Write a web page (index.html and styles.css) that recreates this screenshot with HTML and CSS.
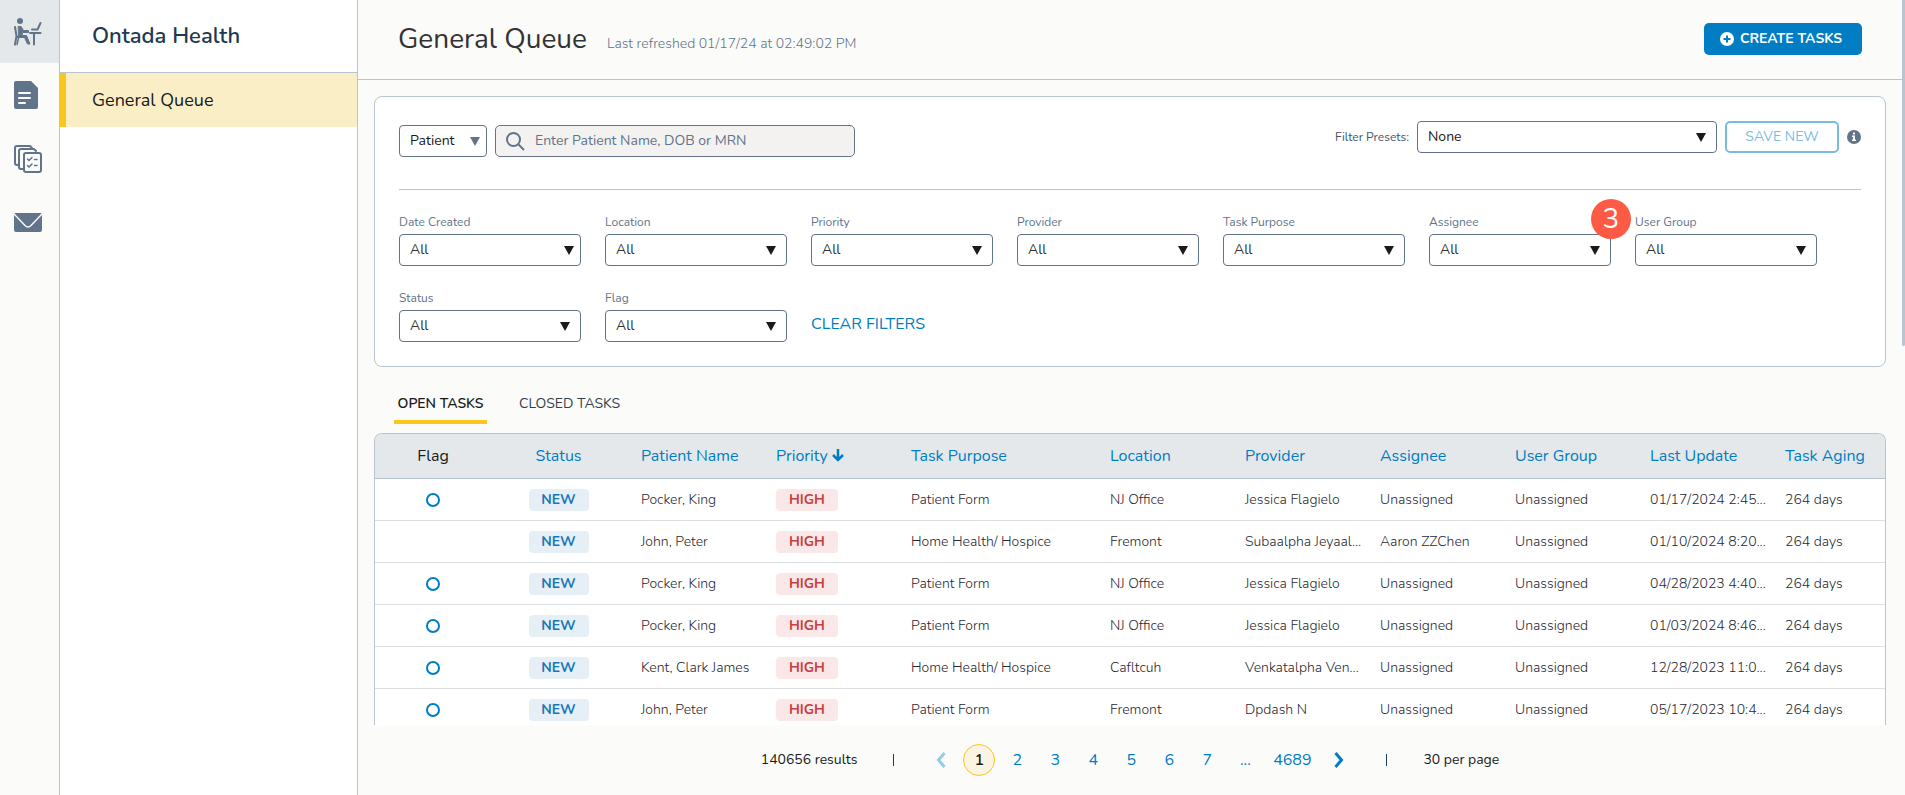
FILE: index.html
```html
<!DOCTYPE html>
<html lang="en">
  <head>
    <meta charset="UTF-8" />
    <meta name="viewport" content="width=device-width, initial-scale=1.0" />
    <title>General Queue</title>
    <link rel="stylesheet" href="styles.css">
  </head>

  <body>
    <nav class="rail">
      <a href="#" class="active" aria-label="Work queue">
        <svg width="28" height="28" viewBox="0 0 28 28" fill="none" stroke="currentColor" stroke-linecap="round" stroke-linejoin="round">
          <circle cx="6" cy="3" r="3" fill="currentColor" stroke="none" />
          <path d="M1 9l1.500 9L1 26.500M2.500 19h2" stroke-width="2" />
          <path d="M4.500 8.500h2.500l2.500 4h5v2H8.500l-.5 3h4.500l3.500 8.500h-2.500l-3-6.500H5z" fill="currentColor" stroke-width="1" />
          <path d="M4.500 20l-1.500 6.500" stroke-width="1.500" />
          <path d="M16 15h10.500M20 15v11.500M18 11.500h5.500l3-6.500" stroke-width="2" />
        </svg>
      </a>
      <a href="#" aria-label="Documents">
        <svg width="28" height="28" viewBox="0 0 28 28">
          <path d="M2 0h15l7 7v19a2 2 0 0 1-2 2H2a2 2 0 0 1-2-2V2a2 2 0 0 1 2-2z" fill="currentColor" />
          <path d="M5 12h11M5 17h11M5 22h6" stroke="#fbfbf9" stroke-width="2" stroke-linecap="round" />
        </svg>
      </a>
      <a href="#" aria-label="Task lists">
        <svg width="28" height="28" viewBox="0 0 28 28" fill="none" stroke="currentColor" stroke-width="2" stroke-linecap="round" stroke-linejoin="round">
          <path d="M5 20H3a2 2 0 0 1-2-2V3a2 2 0 0 1 2-2h13l2 2" />
          <path d="M9 24H7a2 2 0 0 1-2-2V6a2 2 0 0 1 2-2h13l2 2" />
          <rect x="10" y="8" width="17" height="19" rx="2" />
          <path d="M13.500 14l1.500 1.500 3-3M13.500 20.500L15 22l3-3M20.500 14.500h2.500M20.500 20.500h2.500" stroke-width="1.500" />
        </svg>
      </a>
      <a href="#" aria-label="Messages">
        <svg width="28" height="28" viewBox="0 0 28 28">
          <path d="M2 4h24a2 2 0 0 1 2 2v15a2 2 0 0 1-2 2H2a2 2 0 0 1-2-2V6a2 2 0 0 1 2-2z" fill="currentColor" />
          <path d="M0 5l11 11.500q3 3 6 0L28 5" fill="none" stroke="#fbfbf9" stroke-width="1.500" />
        </svg>
      </a>
    </nav>

    <aside class="sidebar">
      <h2>Ontada Health</h2>
      <a href="#">General Queue</a>
    </aside>

    <main>
      <header>
        <h1>General Queue</h1>
        <p>Last refreshed 01/17/24 at 02:49:02 PM</p>
        <button class="create">
          <svg width="14" height="14" viewBox="0 0 14 14">
            <circle cx="7" cy="7" r="7" fill="#fff" />
            <path d="M7 3.500v7M3.500 7h7" stroke="#007dc3" stroke-width="2" />
          </svg>
          CREATE TASKS
        </button>
      </header>

      <section class="filters">
        <div class="search-row">
          <div class="select search-type">
            <select aria-label="Search by">
              <option>Patient</option>
            </select>
          </div>
          <div class="search">
            <svg width="19" height="19" viewBox="0 0 19 19" fill="none" stroke="#62748a" stroke-width="2">
              <circle cx="7.500" cy="7.500" r="6.500" />
              <path d="M12 12l6 6" />
            </svg>
            <input type="text" aria-label="Search patients" placeholder="Enter Patient Name, DOB or MRN" />
          </div>
          <div class="presets">
            <label for="presets">Filter Presets:</label>
            <div class="select">
              <select id="presets">
                <option>None</option>
              </select>
            </div>
            <button class="save" disabled>SAVE NEW</button>
            <svg class="info" width="14" height="14" viewBox="0 0 14 14">
              <circle cx="7" cy="7" r="7" fill="#62748a" />
              <path d="M6 2.500h2v2H6zM5 5.500h3v4h1v1.500H5V9.500h1V7H5z" fill="#fff" />
            </svg>
          </div>
        </div>

        <div class="filter-grid">
          <div class="field">
            <label for="date">Date Created</label>
            <div class="select date">
              <select id="date"><option>All</option></select>
            </div>
          </div>
          <div class="field">
            <label for="location">Location</label>
            <div class="select">
              <select id="location"><option>All</option></select>
            </div>
          </div>
          <div class="field">
            <label for="priority">Priority</label>
            <div class="select">
              <select id="priority"><option>All</option></select>
            </div>
          </div>
          <div class="field">
            <label for="provider">Provider</label>
            <div class="select">
              <select id="provider"><option>All</option></select>
            </div>
          </div>
          <div class="field">
            <label for="purpose">Task Purpose</label>
            <div class="select">
              <select id="purpose"><option>All</option></select>
            </div>
          </div>
          <div class="field">
            <label for="assignee">Assignee</label>
            <div class="select">
              <select id="assignee"><option>All</option></select>
            </div>
            <span class="marker">3</span>
          </div>
          <div class="field">
            <label for="group">User Group</label>
            <div class="select">
              <select id="group"><option>All</option></select>
            </div>
          </div>
          <div class="field">
            <label for="status">Status</label>
            <div class="select">
              <select id="status"><option>All</option></select>
            </div>
          </div>
          <div class="field">
            <label for="flag">Flag</label>
            <div class="select">
              <select id="flag"><option>All</option></select>
            </div>
          </div>
          <button class="clear">CLEAR FILTERS</button>
        </div>
      </section>

      <div class="tabs">
        <button class="selected">OPEN TASKS</button>
        <button>CLOSED TASKS</button>
      </div>

      <div class="table-wrap">
        <table>
          <colgroup>
            <col class="col-flag" />
            <col span="3" />
            <col class="col-purpose" />
            <col span="5" />
            <col class="col-aging" />
          </colgroup>
          <thead>
            <tr>
              <th class="center plain">Flag</th>
              <th class="center">Status</th>
              <th>Patient Name</th>
              <th>Priority<svg width="12" height="13" viewBox="0 0 12 13" fill="none" stroke="currentColor" stroke-width="2.500"><path d="M6 0v11.500M1 6l5 5 5-5" /></svg></th>
              <th>Task Purpose</th>
              <th>Location</th>
              <th>Provider</th>
              <th>Assignee</th>
              <th>User Group</th>
              <th>Last Update</th>
              <th>Task Aging</th>
            </tr>
          </thead>
          <tbody>
            <tr>
              <td class="center"><span class="ring"></span></td>
              <td class="center"><span class="tag new">NEW</span></td>
              <td>Pocker, King</td>
              <td><span class="tag high">HIGH</span></td>
              <td>Patient Form</td>
              <td>NJ Office</td>
              <td>Jessica Flagielo</td>
              <td>Unassigned</td>
              <td>Unassigned</td>
              <td>01/17/2024 2:45...</td>
              <td>264 days</td>
            </tr>
            <tr>
              <td></td>
              <td class="center"><span class="tag new">NEW</span></td>
              <td>John, Peter</td>
              <td><span class="tag high">HIGH</span></td>
              <td>Home Health/ Hospice</td>
              <td>Fremont</td>
              <td>Subaalpha Jeyaal...</td>
              <td>Aaron ZZChen</td>
              <td>Unassigned</td>
              <td>01/10/2024 8:20...</td>
              <td>264 days</td>
            </tr>
            <tr>
              <td class="center"><span class="ring"></span></td>
              <td class="center"><span class="tag new">NEW</span></td>
              <td>Pocker, King</td>
              <td><span class="tag high">HIGH</span></td>
              <td>Patient Form</td>
              <td>NJ Office</td>
              <td>Jessica Flagielo</td>
              <td>Unassigned</td>
              <td>Unassigned</td>
              <td>04/28/2023 4:40...</td>
              <td>264 days</td>
            </tr>
            <tr>
              <td class="center"><span class="ring"></span></td>
              <td class="center"><span class="tag new">NEW</span></td>
              <td>Pocker, King</td>
              <td><span class="tag high">HIGH</span></td>
              <td>Patient Form</td>
              <td>NJ Office</td>
              <td>Jessica Flagielo</td>
              <td>Unassigned</td>
              <td>Unassigned</td>
              <td>01/03/2024 8:46...</td>
              <td>264 days</td>
            </tr>
            <tr>
              <td class="center"><span class="ring"></span></td>
              <td class="center"><span class="tag new">NEW</span></td>
              <td>Kent, Clark James</td>
              <td><span class="tag high">HIGH</span></td>
              <td>Home Health/ Hospice</td>
              <td>Cafltcuh</td>
              <td>Venkatalpha Ven...</td>
              <td>Unassigned</td>
              <td>Unassigned</td>
              <td>12/28/2023 11:0...</td>
              <td>264 days</td>
            </tr>
            <tr>
              <td class="center"><span class="ring"></span></td>
              <td class="center"><span class="tag new">NEW</span></td>
              <td>John, Peter</td>
              <td><span class="tag high">HIGH</span></td>
              <td>Patient Form</td>
              <td>Fremont</td>
              <td>Dpdash N</td>
              <td>Unassigned</td>
              <td>Unassigned</td>
              <td>05/17/2023 10:4...</td>
              <td>264 days</td>
            </tr>
          </tbody>
        </table>
      </div>

      <footer>
        <span class="results">140656 results</span>
        <span class="bar"></span>
        <div class="pages">
          <button class="prev" aria-label="Previous page" disabled>
            <svg width="10" height="16" viewBox="0 0 10 16" fill="none" stroke="currentColor" stroke-width="3"><path d="M8.500 1L2.500 8l6 7" /></svg>
          </button>
          <a href="#" class="current">1</a>
          <a href="#">2</a>
          <a href="#">3</a>
          <a href="#">4</a>
          <a href="#">5</a>
          <a href="#">6</a>
          <a href="#">7</a>
          <span>...</span>
          <a href="#" class="last">4689</a>
          <button class="next" aria-label="Next page">
            <svg width="10" height="16" viewBox="0 0 10 16" fill="none" stroke="currentColor" stroke-width="3"><path d="M1.500 1l6 7-6 7" /></svg>
          </button>
        </div>
        <span class="bar"></span>
        <span>30 per page</span>
      </footer>
    </main>
    <div class="scrollbar"></div>
  </body>
</html>
```

FILE: styles.css
```css
* {
  box-sizing: border-box;
}
body {
  display: flex;
  height: 100vh;
  margin: 0;
  overflow: hidden;
  background-color: #fbfbf9;
  color: #1a1a1a;
  font-family: Nunito, Lato, sans-serif;
  font-size: 14px;
  line-height: 20px;
}
h1, h2, p {
  margin: 0;
}
a {
  color: #007dc3;
  text-decoration: none;
}
button, input, select {
  font: inherit;
}
button {
  padding: 0;
  border: none;
  background: none;
  color: #007dc3;
}
svg {
  flex: none;
}

/* left rail */
.rail {
  flex: none;
  width: 60px;
  border-right: 1px solid #b9c5ce;
}
.rail a {
  display: flex;
  align-items: center;
  height: 64px;
  padding-left: 14px;
  color: #62748a;
}
.rail .active {
  height: 63px;
  background-color: #e4e8eb;
}

.sidebar {
  flex: none;
  width: 298px;
  border-right: 1px solid #b9c5ce;
  background-color: #fff;
}
.sidebar h2 {
  height: 73px;
  padding-left: 32px;
  border-bottom: 1px solid #b9c5ce;
  color: #1e3a52;
  font-size: 22px;
  font-weight: 600;
  line-height: 72px;
}
.sidebar a {
  display: block;
  padding-left: 26px;
  border-left: 6px solid #f9c81e;
  background-color: #f9eec6;
  color: #1a1a1a;
  font-size: 18px;
  line-height: 54px;
}

/* page */
main {
  display: flex;
  flex: 1;
  flex-direction: column;
  min-width: 0;
}
header {
  display: flex;
  align-items: baseline;
  gap: 20px;
  padding: 23px 40px 24px;
  border-bottom: 1px solid #b9c5ce;
}
h1 {
  color: #333;
  font-size: 28px;
  font-weight: 400;
  line-height: 32px;
}
header p {
  color: #62748a;
  font-weight: 300;
}
.create {
  display: flex;
  align-items: center;
  align-self: flex-start;
  gap: 6px;
  min-width: 158px;
  height: 32px;
  margin-left: auto;
  padding: 0 16px;
  border-radius: 5px;
  background-color: #007dc3;
  color: #fff;
  font-weight: 700;
}

.filters {
  margin: 16px 16px 0;
  padding: 24px;
  border: 1px solid #b9c5ce;
  border-radius: 8px;
  background-color: #fff;
}
.search-row {
  display: flex;
  align-items: flex-start;
  height: 69px;
  border-bottom: 1px solid #b9c5ce;
}
.select {
  position: relative;
}
.select::after {
  content: "";
  position: absolute;
  top: 12px;
  right: 11px;
  border: 5px solid transparent;
  border-top: 9px solid #1a1a1a;
  border-bottom: none;
  pointer-events: none;
}
select {
  display: block;
  appearance: none;
  width: 100%;
  height: 32px;
  padding: 0 10px;
  border: 1px solid #62748a;
  border-radius: 4px;
  background-color: #fff;
  color: #1a1a1a;
}
.search-type {
  width: 88px;
  margin: 4px 8px 0 0;
}
.search-type::after {
  right: 7px;
  border-top-color: #62748a;
}
.search {
  display: flex;
  align-items: center;
  gap: 10px;
  width: 360px;
  height: 32px;
  margin-top: 4px;
  padding: 0 10px;
  border: 1px solid #62748a;
  border-radius: 5px;
  background-color: #f3f2f0;
}
.search input {
  flex: 1;
  min-width: 0;
  padding: 0;
  border: none;
  outline: none;
  background: none;
}
.search input::placeholder {
  color: #62748a;
}
.presets {
  display: flex;
  align-items: center;
  gap: 8px;
  margin-left: auto;
}
.presets label {
  color: #42566b;
  font-size: 12px;
}
.presets .select {
  width: 300px;
}
.save {
  width: 114px;
  height: 32px;
  border: 2px solid #7abce0;
  border-radius: 5px;
  color: #7abce0;
}

.filter-grid {
  display: grid;
  grid-template-columns: repeat(auto-fill, 182px);
  gap: 22px 24px;
  padding-top: 22px;
}
.field {
  position: relative;
}
.field label {
  display: block;
  padding-bottom: 2px;
  color: #62748a;
  font-size: 12px;
}
.field select {
  color: #333;
}
.date::after {
  right: 7px;
}
/* callout over the corner of the assignee filter */
.marker {
  position: absolute;
  top: -13px;
  right: -20px;
  width: 40px;
  border-radius: 50%;
  background-color: #ff5a43;
  color: #fff;
  font-size: 28px;
  line-height: 40px;
  text-align: center;
}
.clear {
  align-self: end;
  justify-self: start;
  font-size: 16px;
  line-height: 36px;
}

.tabs {
  display: flex;
  gap: 32px;
  padding: 24px 36px 9px;
}
.tabs button {
  min-width: 93px;
  padding: 2px 0 5px;
  border-bottom: 4px solid transparent;
  color: #333f4c;
  line-height: 22px;
}
.tabs .selected {
  border-color: #f9c81e;
  color: #1a1a1a;
  font-weight: 600;
}

.table-wrap {
  flex: 1;
  min-height: 0;
  margin: 0 16px;
  overflow: hidden;
  border: 1px solid #b9c5ce;
  border-bottom: none;
  border-radius: 8px 8px 0 0;
  background-color: #fff;
}
table {
  width: 100%;
  border-collapse: separate;
  border-spacing: 0;
  table-layout: fixed;
}
col {
  width: 135px;
}
.col-flag {
  width: 116px;
}
.col-purpose {
  width: 199px;
}
.col-aging {
  width: 115px;
}
th, td {
  padding: 0 3px 0 15px;
  overflow: hidden;
  text-align: left;
  text-overflow: ellipsis;
  white-space: nowrap;
}
th {
  height: 45px;
  border-bottom: 1px solid #b9c5ce;
  background-color: #e4e8eb;
  color: #007dc3;
  font-size: 16px;
  font-weight: 400;
}
th svg {
  margin-left: 4px;
  vertical-align: -1px;
}
td {
  height: 42px;
  border-bottom: 1px solid #dcdfe1;
  color: #1f2933;
  font-weight: 300;
}
.center {
  padding: 0;
  text-align: center;
}
.plain {
  color: #1a1a1a;
}
.ring {
  display: inline-block;
  width: 14px;
  height: 14px;
  border: 2px solid #007dc3;
  border-radius: 50%;
  vertical-align: middle;
}
.tag {
  display: inline-block;
  border-radius: 4px;
  font-weight: 700;
  line-height: 22px;
  text-align: center;
  vertical-align: middle;
}
.new {
  width: 60px;
  background-color: #e6eff6;
  color: #1676b9;
}
.high {
  width: 62px;
  background-color: #fae8e8;
  color: #c93f40;
}

footer {
  display: flex;
  align-items: center;
  justify-content: center;
  gap: 36px;
  height: 70px;
}
.bar {
  width: 1px;
  height: 12px;
  background-color: #1e3a52;
}
.pages {
  display: flex;
  align-items: center;
  gap: 6px;
  color: #007dc3;
  font-size: 16px;
}
.pages a, .pages span {
  width: 32px;
  line-height: 32px;
  text-align: center;
}
.pages .current {
  border: 1px solid #f9c81e;
  border-radius: 50%;
  background-color: #faf4e2;
  color: #1a1a1a;
  font-weight: 600;
  line-height: 30px;
}
.pages .last {
  width: 50px;
}
.pages button {
  display: flex;
  justify-content: center;
  width: 22px;
}
.pages .prev {
  margin-right: 5px;
  color: #93cae8;
}
.pages .next {
  margin-left: 5px;
}
/* page scroll thumb */
.scrollbar {
  width: 3px;
  height: 346px;
  border-radius: 0 0 2px 2px;
  background-color: #b9c5ce;
}
```
